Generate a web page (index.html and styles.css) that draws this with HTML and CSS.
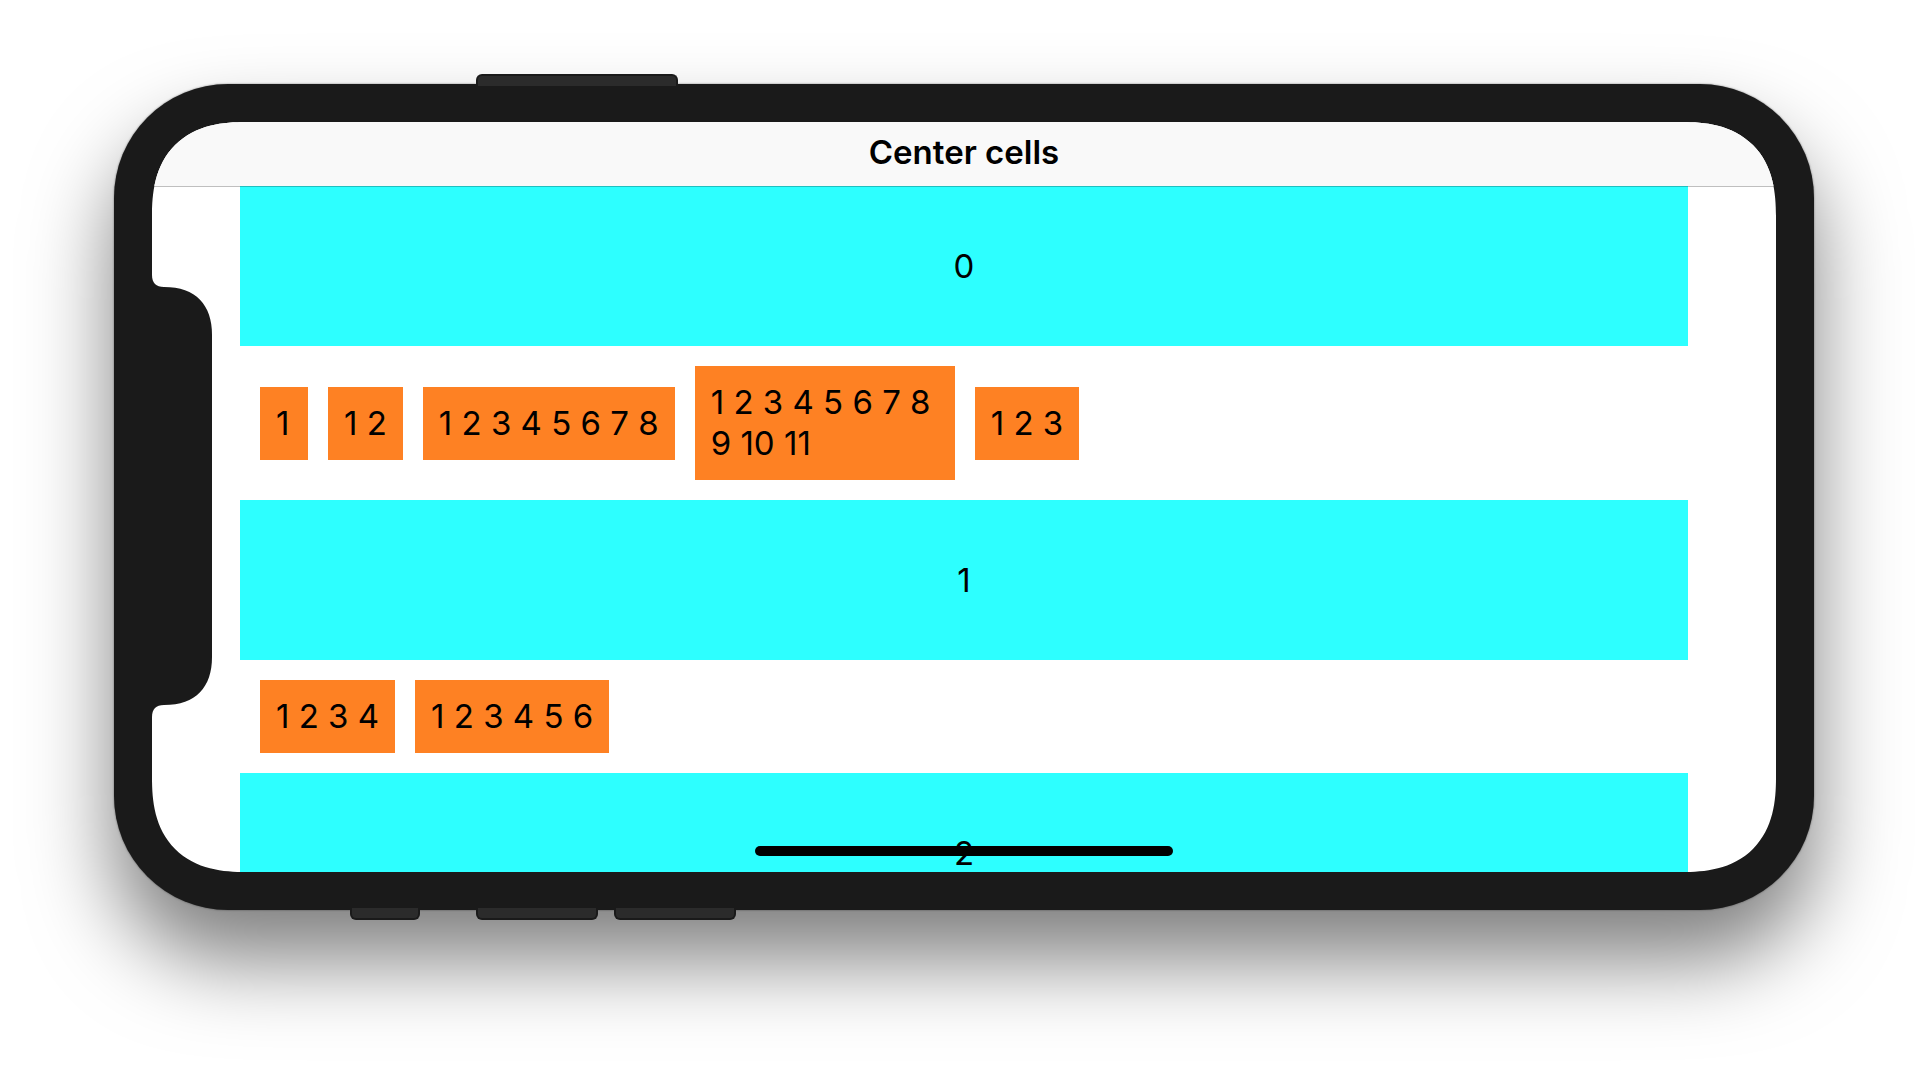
FILE: index.html
```html
<!DOCTYPE html>
<html lang="en">
<head>
  <meta charset="utf-8">
  <meta name="viewport" content="width=device-width, initial-scale=1">
  <title>Center cells</title>
  <link rel="stylesheet" href="styles.css">
</head>
<body>
  <div class="device">
    <div class="keys keys-top">
      <span class="key key-power"></span>
    </div>
    <div class="frame">
      <div class="screen">
        <header class="navbar">
          <h1 class="title">Center cells</h1>
        </header>
        <main class="collection">
          <h2 class="section-header">0</h2>
          <ul class="cells">
            <li class="cell">1</li>
            <li class="cell">1 2</li>
            <li class="cell">1 2 3 4 5 6 7 8</li>
            <li class="cell">1 2 3 4 5 6 7 8 9 10 11</li>
            <li class="cell">1 2 3</li>
          </ul>
          <h2 class="section-header">1</h2>
          <ul class="cells">
            <li class="cell">1 2 3 4</li>
            <li class="cell">1 2 3 4 5 6</li>
          </ul>
          <h2 class="section-header">2</h2>
        </main>
        <svg class="notch" viewBox="0 0 60 442" aria-hidden="true">
          <path d="M0 0C0 8 4 12 12 12C44 12 60 30 60 60V382C60 412 44 430 12 430C4 430 0 434 0 442Z"/>
        </svg>
        <div class="home-indicator"></div>
      </div>
    </div>
    <div class="keys keys-bottom">
      <span class="key key-mute"></span>
      <span class="key key-volume"></span>
      <span class="key key-volume"></span>
    </div>
  </div>
</body>
</html>
```
FILE: styles.css
```css
* {
  box-sizing: border-box;
}

body {
  min-height: 100vh;
  margin: 0;
  padding: 74px 114px 160px;
  background: #fff;
  color: #000;
  font-family: Inter, "Liberation Sans", sans-serif;
}

h1,
h2,
ul {
  margin: 0;
  padding: 0;
}

.frame {
  padding: 38px;
  border-radius: 114px;
  background: #1a1a1a;
  box-shadow: 0 0 2px rgba(0, 0, 0, 0.5), 0 50px 84px rgba(0, 0, 0, 0.5);
}

/* Hardware keys overlap the frame edge by 2px */
.keys {
  position: relative;
  z-index: 1;
  display: flex;
}

.keys-top {
  margin-bottom: -2px;
  padding-left: 362px;
}

.keys-bottom {
  margin-top: -2px;
  padding-left: 236px;
}

.key {
  height: 12px;
  border: 2px solid #1a1a1a;
  background: #2b2b2b;
}

.keys-top .key {
  border-bottom: 0;
  border-radius: 6px 6px 0 0;
}

.keys-bottom .key {
  border-top: 0;
  border-radius: 0 0 6px 6px;
}

.key-power {
  width: 202px;
}

.key-mute {
  width: 70px;
  margin-right: 56px;
}

.key-volume {
  width: 122px;
  margin-right: 16px;
}

.screen {
  position: relative;
  aspect-ratio: 812 / 375;
  overflow: hidden;
  border-radius: 80px;
  background: #fff;
}

/* Continuous corners where the browser can draw them */
@supports (corner-shape: superellipse(1.3)) {
  .screen {
    border-radius: 94px;
    corner-shape: superellipse(1.3);
  }
}

.navbar {
  position: relative;
  display: flex;
  align-items: center;
  justify-content: center;
  height: 64px;
  padding-bottom: 4px;
  background: #f9f9f9;
  box-shadow: 0 1px 0 rgba(0, 0, 0, 0.25);
}

.title {
  font-size: 33px;
  font-weight: 600;
  line-height: 40px;
}

.collection {
  padding: 0 88px;
}

.section-header {
  display: flex;
  align-items: center;
  justify-content: center;
  height: 160px;
  background: #2dffff;
  font-size: 33px;
  font-weight: 400;
  line-height: 41px;
}

.cells {
  display: flex;
  align-items: center;
  gap: 20px;
  padding: 20px;
  list-style: none;
}

.cell {
  min-width: 48px;
  max-width: 260px;
  padding: 16px;
  background: #fe8123;
  font-size: 33px;
  line-height: 41px;
}

.notch {
  position: absolute;
  top: 50%;
  left: 0;
  width: 60px;
  height: 442px;
  margin-top: -222px;
  fill: #1a1a1a;
}

.home-indicator {
  position: absolute;
  bottom: 16px;
  left: 50%;
  width: 418px;
  height: 10px;
  margin-left: -209px;
  border-radius: 5px;
  background: #000;
}
```
